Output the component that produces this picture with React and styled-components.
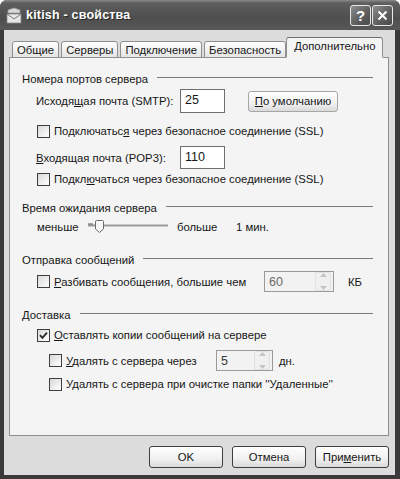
import styled, { createGlobalStyle } from 'styled-components';

const GlobalStyle = createGlobalStyle`
  html, body { margin: 0; padding: 0; background: #fff; }
  body {
    font-family: "Liberation Sans", Arial, sans-serif;
    font-size: 11.3px;
    color: #161616;
  }
`;

const Window = styled.div`
  width: 400px;
  height: 479px;
  box-sizing: border-box;
  display: flex;
  flex-direction: column;
  background: #3a3a3a;
  border-radius: 7px 7px 0 0;
  overflow: hidden;
`;

const TitleBar = styled.div`
  height: 30px;
  flex: none;
  display: flex;
  align-items: center;
  padding: 0 7px 0 5px;
  background: linear-gradient(#8a8a8a 0, #5e5e5e 3px, #4e4e4e 60%, #585858 100%);
  color: #fff;
`;

const Title = styled.span`
  margin-left: 3px;
  font-weight: bold;
  font-size: 12.5px;
  letter-spacing: 0.2px;
  text-shadow: 1px 1px 0 #2a2a2a;
  flex: 1;
`;

const TitleButton = styled.div`
  width: 21px;
  height: 21px;
  box-sizing: border-box;
  margin-left: 1px;
  border: 1px solid #e8e8e8;
  border-radius: 3px;
  background: linear-gradient(135deg, #8c8c8c, #5c5c5c 60%, #4a4a4a);
  display: flex;
  align-items: center;
  justify-content: center;
  color: #fff;
  font-weight: bold;
  font-size: 15px;
`;

const Body = styled.div`
  flex: 1;
  margin: 0 5px 4px 4px;
  background: #dcdcdc;
  padding: 7px 6px 0 5px;
  display: flex;
  flex-direction: column;
`;

const TabRow = styled.div`
  display: flex;
  align-items: flex-end;
  height: 21px;
  padding-left: 3px;
  margin-bottom: -1px;
  position: relative;
  z-index: 1;
`;

const Tab = styled.div`
  box-sizing: border-box;
  height: ${p => (p.$active ? 21 : 17)}px;
  padding: 0 ${p => (p.$active ? 7 : 4)}px ${p => (p.$active ? 3 : 0)}px;
  margin: ${p => (p.$active ? '0 -2px 0 -2px' : '0 2px 0 0')};
  border: 1px solid #8f8f8f;
  border-bottom: ${p => (p.$active ? '1px solid #f4f4f4' : '1px solid #8f8f8f')};
  border-top-color: ${p => (p.$active ? '#6e6e6e' : '#8f8f8f')};
  border-radius: 3px 3px 0 0;
  background: ${p => (p.$active ? '#f4f4f4' : 'linear-gradient(#ffffff, #e4e4e4)')};
  display: flex;
  align-items: center;
  white-space: nowrap;
`;

const Panel = styled.div`
  box-sizing: border-box;
  height: 379px;
  border: 1px solid #8f8f8f;
  background: #f4f4f4;
  padding: 14px 15px 0 12px;
  display: flex;
  flex-direction: column;
`;

const GroupHeader = styled.div`
  display: flex;
  align-items: center;
  gap: 9px;
  height: 14px;
  margin-top: ${p => p.$mt || 0}px;
  &::after {
    content: '';
    flex: 1;
    height: 1px;
    background: #7a7a7a;
    margin-top: -4px;
  }
`;

const Row = styled.div`
  display: flex;
  align-items: center;
  height: ${p => p.$h || 14}px;
  margin-top: ${p => p.$mt || 0}px;
  padding-left: ${p => p.$indent || 0}px;
  white-space: nowrap;
`;

const Label = styled.span`
  display: inline-block;
  width: ${p => (p.$w ? `${p.$w}px` : 'auto')};
  flex: none;
  margin-left: ${p => p.$ml || 0}px;
`;

const U = styled.span`
  text-decoration: underline;
`;

const Box = styled.span`
  box-sizing: border-box;
  width: 13px;
  height: 13px;
  flex: none;
  border: 1px solid #3e3e3e;
  background: linear-gradient(135deg, #d8d8d8, #f8f8f8 80%);
  display: flex;
  align-items: center;
  justify-content: center;
  margin-right: 4px;
`;

const Edit = styled.div`
  box-sizing: border-box;
  width: ${p => p.$w}px;
  height: ${p => p.$h}px;
  border: 1px solid #6f6f6f;
  background: #fff;
  padding: 3px 0 0 4px;
  font-size: 12.5px;
`;

const Spin = styled.div`
  box-sizing: border-box;
  width: ${p => p.$w}px;
  height: 21px;
  margin-left: ${p => p.$ml || 0}px;
  border: 1px solid #9a9a9a;
  background: #f2f2f2;
  display: flex;
  align-items: center;
  color: ${p => p.$color || '#6a6a6a'};
  font-size: 12.5px;
`;

const SpinValue = styled.span`
  flex: 1;
  padding-left: 4px;
`;

const SpinArrows = styled.div`
  width: 14px;
  height: 17px;
  margin-right: 2px;
  display: flex;
  flex-direction: column;
  justify-content: space-between;
  align-items: center;
  border: 1px solid #e2e2e2;
  background: #f0f0f0;
  border-radius: 2px;
`;

const PushButton = styled.div`
  box-sizing: border-box;
  width: ${p => p.$w || 74}px;
  height: ${p => p.$h || 22}px;
  margin-left: ${p => p.$ml || 0}px;
  border: 1px solid ${p => (p.$soft ? '#a6a6a6' : '#3e3e3e')};
  border-radius: 3px;
  background: linear-gradient(#ffffff, #f0f0f0 60%, #dadada);
  display: flex;
  align-items: center;
  justify-content: center;
  white-space: nowrap;
`;

const Footer = styled.div`
  display: flex;
  justify-content: flex-end;
  gap: 9px;
  margin-top: 10px;
`;

const SliderTrack = styled.svg`
  flex: none;
  margin-right: 9px;
`;

const Check = () => (
  <svg width="9" height="9" viewBox="0 0 9 9">
    <path d="M1 4.2 L3.4 6.8 L8 1.6" fill="none" stroke="#2a2a2a" strokeWidth="1.8" />
  </svg>
);

const CheckBox = ({ checked }) => <Box>{checked && <Check />}</Box>;

const Arrows = () => (
  <SpinArrows>
    <svg width="7" height="4" viewBox="0 0 7 4"><path d="M0 4 L3.5 0 L7 4Z" fill="#c4c4c4" /></svg>
    <svg width="7" height="4" viewBox="0 0 7 4"><path d="M0 0 L3.5 4 L7 0Z" fill="#c4c4c4" /></svg>
  </SpinArrows>
);

const AppIcon = () => (
  <svg width="18" height="17" viewBox="0 0 18 17">
    <path d="M3 3 L9 1 L15 3 L15 6 L3 6Z" fill="#d8d8d8" stroke="#9a9a9a" strokeWidth="0.8" />
    <rect x="2" y="7" width="14" height="9" fill="#e6e6e6" stroke="#8a8a8a" strokeWidth="0.8" />
    <path d="M2 7 L9 12 L16 7" fill="none" stroke="#7a7a7a" strokeWidth="1" />
  </svg>
);

const App = () => {
  return (
    <>
      <GlobalStyle />
      <Window>
        <TitleBar>
          <AppIcon />
          <Title>kitish - свойства</Title>
          <TitleButton>?</TitleButton>
          <TitleButton>
            <svg width="11" height="11" viewBox="0 0 11 11">
              <path d="M1.5 1.5 L9.5 9.5 M9.5 1.5 L1.5 9.5" stroke="#fff" strokeWidth="2" />
            </svg>
          </TitleButton>
        </TitleBar>
        <Body>
          <TabRow>
            <Tab>Общие</Tab>
            <Tab>Серверы</Tab>
            <Tab>Подключение</Tab>
            <Tab>Безопасность</Tab>
            <Tab $active>Дополнительно</Tab>
          </TabRow>
          <Panel>
            <GroupHeader>Номера портов сервера</GroupHeader>
            <Row $h={24} $mt={3} $indent={14}>
              <Label $w={144}>Исходя<U>щ</U>ая почта (SMTP):</Label>
              <Edit $w={45} $h={24}>25</Edit>
              <PushButton $soft $w={90} $h={21} $ml={23}><U>П</U>о умолчанию</PushButton>
            </Row>
            <Row $mt={11} $indent={15}>
              <CheckBox />
              <Label>Подключатьс<U>я</U> через безопасное соединение (SSL)</Label>
            </Row>
            <Row $h={23} $mt={8} $indent={14}>
              <Label $w={144}><U>В</U>ходящая почта (POP3):</Label>
              <Edit $w={45} $h={23}>110</Edit>
            </Row>
            <Row $mt={3} $indent={15}>
              <CheckBox />
              <Label>Подкл<U>ю</U>чаться через безопасное соединение (SSL)</Label>
            </Row>

            <GroupHeader $mt={15}>Время ожидания сервера</GroupHeader>
            <Row $h={20} $mt={2} $indent={15}>
              <Label $w={51}>меньше</Label>
              <SliderTrack width="80" height="16" viewBox="0 0 80 16">
                <line x1="0" y1="6.5" x2="80" y2="6.5" stroke="#9a9a9a" strokeWidth="2" />
                <path d="M0 5 L5 5" stroke="#555" strokeWidth="1.2" />
                <path d="M8.5 1.5 L14.5 1.5 Q15.5 1.5 15.5 2.5 L15.5 10 L11.5 13.5 L7.5 10 L7.5 2.5 Q7.5 1.5 8.5 1.5Z" fill="#f6f6f6" stroke="#6a6a6a" strokeWidth="1" />
              </SliderTrack>
              <Label $w={59}>больше</Label>
              <Label>1 мин.</Label>
            </Row>

            <GroupHeader $mt={16}>Отправка сообщений</GroupHeader>
            <Row $h={21} $mt={4} $indent={15}>
              <CheckBox />
              <Label $w={210}><U>Р</U>азбивать сообщения, большие чем</Label>
              <Spin $w={70}>
                <SpinValue>60</SpinValue>
                <Arrows />
              </Spin>
              <Label $ml={14}>КБ</Label>
            </Row>

            <GroupHeader $mt={16}>Доставка</GroupHeader>
            <Row $mt={6} $indent={15}>
              <CheckBox checked />
              <Label><U>О</U>ставлять копии сообщений на сервере</Label>
            </Row>
            <Row $h={21} $mt={8} $indent={27}>
              <CheckBox />
              <Label $w={150}><U>У</U>далять с сервера через</Label>
              <Spin $w={57} $color="#3a3a3a">
                <SpinValue>5</SpinValue>
                <Arrows />
              </Spin>
              <Label $ml={6}>дн.</Label>
            </Row>
            <Row $mt={6} $indent={27}>
              <CheckBox />
              <Label>У<U>д</U>алять с сервера при очистке папки ''Удаленные''</Label>
            </Row>
          </Panel>
          <Footer>
            <PushButton>OK</PushButton>
            <PushButton>Отмена</PushButton>
            <PushButton>При<U>м</U>енить</PushButton>
          </Footer>
        </Body>
      </Window>
    </>
  );
};

export default App;
